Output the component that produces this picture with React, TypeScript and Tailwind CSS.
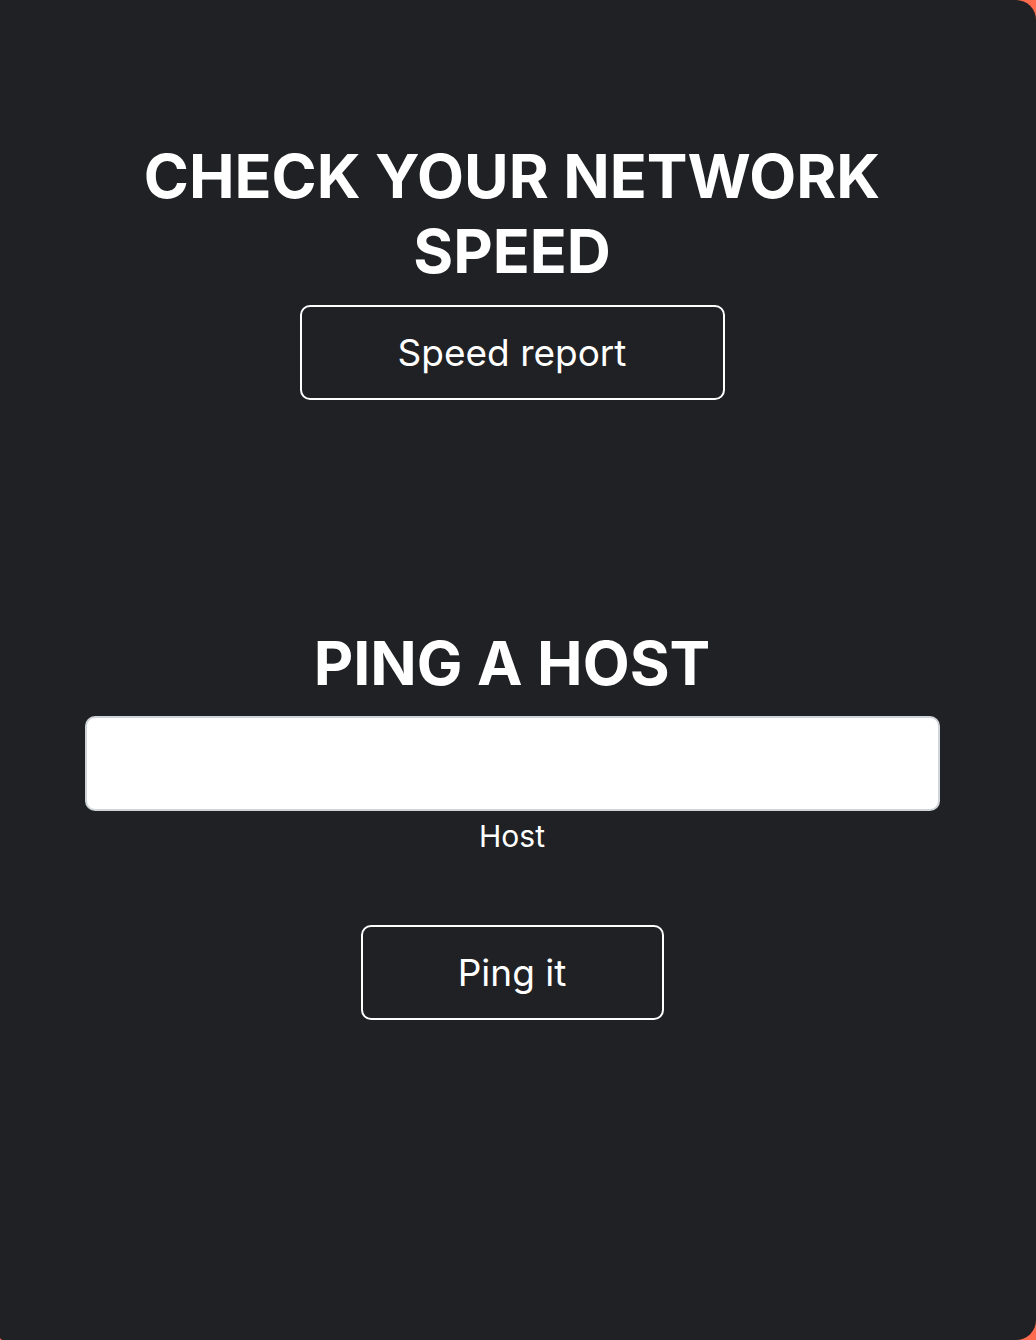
import { useState } from "react";

export default function App() {
  const [host, setHost] = useState("");

  return (
    <div className="w-[1036px] h-[1340px] bg-[#ff6b4f] font-['Inter',sans-serif]">
      <div className="w-full h-full bg-[#1f2124] rounded-tr-[20px] rounded-br-[20px] rounded-bl-[3px] text-white">
        <div className="w-[1024px] flex flex-col items-center pt-[139px]">
          <h1 className="text-[61px] leading-[75px] font-bold text-center w-[800px]">
            CHECK YOUR NETWORK SPEED
          </h1>
          <button className="mt-[16px] w-[425px] h-[95px] border-2 border-white rounded-[10px] text-[37px] leading-none">
            Speed report
          </button>

          <h2 className="mt-[226px] text-[61px] leading-[75px] font-bold text-center">
            PING A HOST
          </h2>
          <input
            value={host}
            onChange={(e) => setHost(e.target.value)}
            className="mt-[15px] w-[855px] h-[95px] bg-white border-2 border-[#ced4da] rounded-[10px] text-black text-[32px] px-4 outline-none"
          />
          <label className="mt-[3px] text-[30px] leading-[1.5]">Host</label>
          <button className="mt-[66px] w-[303px] h-[95px] border-2 border-white rounded-[10px] text-[37px] leading-none">
            Ping it
          </button>
        </div>
      </div>
    </div>
  );
}
